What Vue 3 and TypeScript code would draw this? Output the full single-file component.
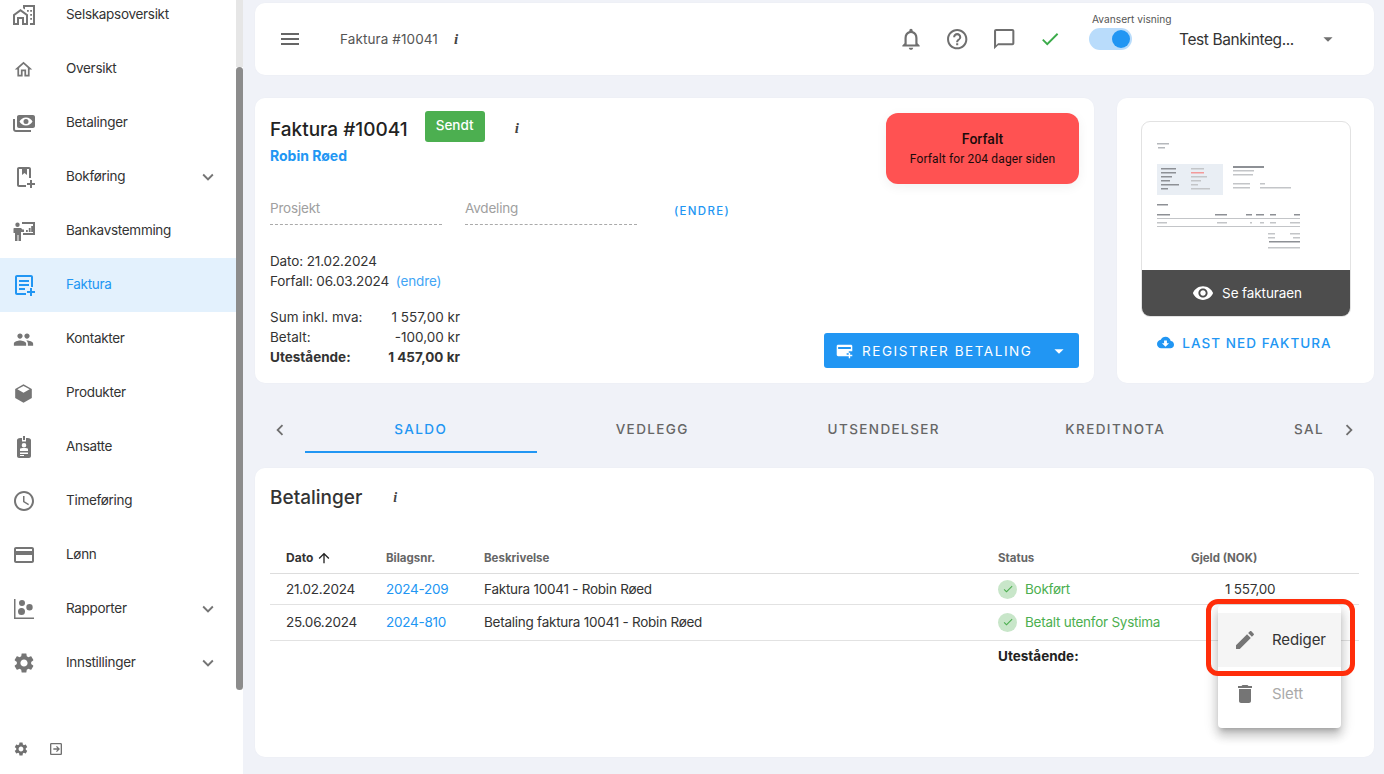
<script setup lang="ts">
interface NavItem { label: string; icon: string; caret?: boolean; active?: boolean; small?: boolean }

const ic: Record<string, string> = {
  company: 'M1 11.5V22h6v-6h3v6h6V11.5L8.5 6zM3 12.4l5.5-4 5.5 4V20h-2v-6H5v6H3zM11 2v3.2l2 1.4V4h8v16h-3v2h5V2zM15 7h1.8v1.8H15zM18.2 7H20v1.8h-1.800zM18.2 11H20v1.800h-1.800zM18.2 15H20v1.800h-1.800z',
  home: 'M12 5.690l5 4.500V18h-2v-6H9v6H7v-7.810l5-4.500M12 3L2 12h3v8h6v-6h2v6h6v-8h3L12 3z',
  pay: 'M7 4h14c1.100 0 2 .9 2 2v9c0 1.100-.9 2-2 2H7c-1.100 0-2-.9-2-2V6c0-1.100.9-2 2-2zm7 2.500c-3 0-5.500 2-6.500 4 1 2 3.500 4 6.500 4s5.500-2 6.500-4c-1-2-3.500-4-6.500-4zm0 1.500a2.500 2.500 0 1 1 0 5 2.500 2.500 0 0 1 0-5zM1 8h2v10c0 .6.4 1 1 1h15v2H4c-1.700 0-3-1.300-3-3z',
  book: 'M7 2h10c1.100 0 2 .9 2 2v9h-2V4h-2v6l-2.500-2L10 10V4H7v16h7v2H7c-1.100 0-2-.9-2-2V4c0-1.100.9-2 2-2zm13 13v3h3v2h-3v3h-2v-3h-3v-2h3v-3z',
  bank: 'M5.500 3.500a2.200 2.200 0 1 1 0 4.400 2.200 2.200 0 0 1 0-4.400zM2 9h7l1.500 1.500H12V13H9v9H6.500v-6h-1v6H3v-8H1.500v-3.500C1.500 9.700 1.700 9 2 9zM10 3h13v13H11v-2h10V5H10zM14 11h1.800v2H14zM16.800 9h1.800v4h-1.800zM19.200 7H21v6h-1.800z',
  invoice: 'M5 2h14c1.100 0 2 .9 2 2v10h-2V4H5v16h9v2H5c-1.100 0-2-.9-2-2V4c0-1.100.9-2 2-2zm2 5h10v2H7zm0 4h10v2H7zm0 4h6v2H7zm13 0v3h3v2h-3v3h-2v-3h-3v-2h3v-3z',
  people: 'M16 11c1.660 0 2.990-1.340 2.990-3S17.660 5 16 5c-1.660 0-3 1.340-3 3s1.340 3 3 3zm-8 0c1.660 0 2.990-1.340 2.990-3S9.660 5 8 5C6.340 5 5 6.340 5 8s1.340 3 3 3zm0 2c-2.330 0-7 1.170-7 3.500V19h14v-2.500c0-2.330-4.670-3.500-7-3.500zm8 0c-.29 0-.62.02-.97.05 1.160.84 1.970 1.970 1.970 3.450V19h6v-2.500c0-2.330-4.670-3.500-7-3.500z',
  box: 'M12 1.500l9.500 5.300v10.400L12 22.500l-9.500-5.300V6.800zM5 7.200l7 3.900 7-3.900-7-3.700z',
  badge: 'M11 1h2v4h-2zM8 3h2v3.500h4V3h2c1.100 0 3 .9 3 2v16c0 1.100-.9 2-2 2H7c-1.100 0-2-.9-2-2V5c0-1.100 1.900-2 3-2zm4 5a2.300 2.300 0 1 0 0 4.600A2.300 2.300 0 0 0 12 8zm-4 6v2h8v-2c0-.8-1.800-1-4-1s-4 .2-4 1zm0 3.500V19h8v-1.500zm0 2.500v1h4v-1z',
  clock: 'M11.990 2C6.470 2 2 6.480 2 12s4.470 10 9.990 10C17.520 22 22 17.520 22 12S17.520 2 11.990 2zM12 20c-4.420 0-8-3.580-8-8s3.580-8 8-8 8 3.580 8 8-3.580 8-8 8zm.5-13H11v6l5.250 3.150.75-1.230-4.500-2.670z',
  card: 'M20 4H4c-1.110 0-1.990.89-1.990 2L2 18c0 1.110.89 2 2 2h16c1.110 0 2-.89 2-2V6c0-1.110-.89-2-2-2zm0 14H4v-6h16v6zm0-10H4V6h16v2z',
  chart: 'M2 2h1.500v18.500H22V22H2zM10 3a3 3 0 1 1 0 6 3 3 0 0 1 0-6zm7.500 4a3.200 3.200 0 1 1 0 6.400 3.200 3.200 0 0 1 0-6.400zM9.500 11a3.500 3.500 0 1 1 0 7 3.500 3.500 0 0 1 0-7z',
  gear: 'M19.140 12.940c.04-.3.06-.61.06-.94 0-.32-.02-.64-.07-.94l2.030-1.580c.18-.14.23-.41.12-.61l-1.920-3.320c-.12-.22-.37-.29-.59-.22l-2.390.96c-.5-.38-1.030-.7-1.620-.94l-.36-2.540c-.04-.24-.24-.41-.48-.41h-3.840c-.24 0-.43.17-.47.41l-.36 2.540c-.59.24-1.130.57-1.620.94l-2.390-.96c-.22-.08-.47 0-.59.22L2.740 8.870c-.12.21-.08.47.12.61l2.030 1.580c-.05.3-.09.63-.09.94s.02.64.07.94l-2.030 1.580c-.18.14-.23.41-.12.61l1.920 3.320c.12.22.37.29.59.22l2.390-.96c.5.38 1.030.7 1.620.94l.36 2.540c.05.24.24.41.48.41h3.840c.24 0 .44-.17.47-.41l.36-2.540c.59-.24 1.130-.56 1.620-.94l2.390.96c.22.08.47 0 .59-.22l1.920-3.320c.12-.22.07-.47-.12-.61l-2.010-1.580zM12 15.600c-1.980 0-3.600-1.620-3.600-3.600s1.620-3.600 3.600-3.600 3.600 1.620 3.600 3.600-1.620 3.600-3.600 3.600z',
  logout: 'M5 3h14c1.100 0 2 .9 2 2v14c0 1.100-.9 2-2 2H5c-1.100 0-2-.9-2-2V5c0-1.100.9-2 2-2zm0 2v14h14V5zm3 6h6.200l-2.200-2.200L13.400 7.400 18 12l-4.600 4.600-1.400-1.400 2.200-2.200H8z',
  expand: 'M16.590 8.590L12 13.170 7.410 8.590 6 10l6 6 6-6z',
  drop: 'M7 10l5 5 5-5z',
  left: 'M15.410 7.410L14 6l-6 6 6 6 1.410-1.410L10.830 12z',
  right: 'M10 6L8.590 7.410 13.170 12l-4.580 4.590L10 18l6-6z',
  menu: 'M3 18h18v-2H3v2zm0-5h18v-2H3v2zm0-7v2h18V6H3z',
  bell: 'M12 22c1.100 0 2-.9 2-2h-4c0 1.100.9 2 2 2zm6-6v-5c0-3.070-1.630-5.640-4.500-6.320V4c0-.83-.67-1.500-1.500-1.500s-1.500.67-1.500 1.500v.68C7.640 5.360 6 7.920 6 11v5l-2 2v1h16v-1l-2-2zm-2 1H8v-6c0-2.480 1.510-4.500 4-4.500s4 2.020 4 4.500v6z',
  help: 'M11 18h2v-2h-2v2zm1-16C6.480 2 2 6.480 2 12s4.480 10 10 10 10-4.480 10-10S17.520 2 12 2zm0 18c-4.410 0-8-3.590-8-8s3.590-8 8-8 8 3.590 8 8-3.590 8-8 8zm0-14c-2.210 0-4 1.790-4 4h2c0-1.100.9-2 2-2s2 .9 2 2c0 2-3 1.750-3 5h2c0-2.250 3-2.500 3-5 0-2.210-1.790-4-4-4z',
  chat: 'M20 2H4c-1.100 0-2 .9-2 2v18l4-4h14c1.100 0 2-.9 2-2V4c0-1.100-.9-2-2-2zm0 14H6l-2 2V4h16v12z',
  check: 'M9 16.170L4.830 12l-1.420 1.410L9 19 21 7l-1.410-1.410z',
  eye: 'M12 4.500C7 4.500 2.730 7.610 1 12c1.730 4.390 6 7.500 11 7.500s9.270-3.110 11-7.500c-1.730-4.390-6-7.500-11-7.500zM12 17c-2.760 0-5-2.240-5-5s2.240-5 5-5 5 2.240 5 5-2.240 5-5 5zm0-8c-1.660 0-3 1.340-3 3s1.340 3 3 3 3-1.340 3-3-1.340-3-3-3z',
  cloud: 'M19.350 10.040C18.670 6.590 15.640 4 12 4 9.110 4 6.600 5.640 5.350 8.040 2.340 8.360 0 10.910 0 14c0 3.310 2.690 6 6 6h13c2.760 0 5-2.240 5-5 0-2.640-2.050-4.780-4.650-4.960zM17 13l-5 5-5-5h3V9h4v4h3z',
  addcard: 'M3 4h18c1.100 0 2 .9 2 2v7h-5v3h-3v4H3c-1.100 0-2-.9-2-2V6c0-1.100.9-2 2-2zm0 6h18V7H3zm17 5v3h3v2h-3v3h-2v-3h-3v-2h3v-3z',
  up: 'M4 12l1.410 1.410L11 7.830V20h2V7.830l5.580 5.590L20 12l-8-8-8 8z',
  edit: 'M3 17.250V21h3.750L17.810 9.940l-3.750-3.750L3 17.250zM20.710 7.040c.39-.39.39-1.020 0-1.410l-2.340-2.340c-.39-.39-1.020-.39-1.410 0l-1.830 1.830 3.750 3.750 1.830-1.830z',
  trash: 'M6 19c0 1.100.9 2 2 2h8c1.100 0 2-.9 2-2V7H6v12zM19 4h-3.500l-1-1h-5l-1 1H5v2h14V4z',
}

const nav: NavItem[] = [
  { label: 'Selskapsoversikt', icon: 'company' },
  { label: 'Oversikt', icon: 'home', small: true },
  { label: 'Betalinger', icon: 'pay' },
  { label: 'Bokføring', icon: 'book', caret: true },
  { label: 'Bankavstemming', icon: 'bank' },
  { label: 'Faktura', icon: 'invoice', active: true },
  { label: 'Kontakter', icon: 'people', small: true },
  { label: 'Produkter', icon: 'box', small: true },
  { label: 'Ansatte', icon: 'badge' },
  { label: 'Timeføring', icon: 'clock' },
  { label: 'Lønn', icon: 'card' },
  { label: 'Rapporter', icon: 'chart', caret: true },
  { label: 'Innstillinger', icon: 'gear', caret: true },
]

const tabs = ['SALDO', 'VEDLEGG', 'UTSENDELSER', 'KREDITNOTA', 'SAL']

const rows = [
  { date: '21.02.2024', nr: '2024-209', text: 'Faktura 10041 - Robin Røed', status: 'Bokført', debt: '1 557,00' },
  { date: '25.06.2024', nr: '2024-810', text: 'Betaling faktura 10041 - Robin Røed', status: 'Betalt utenfor Systima', debt: '' },
]
</script>

<template>
  <div class="app">
    <aside class="side">
      <div class="side-main">
        <ul class="nav">
          <li v-for="n in nav" :key="n.label" class="nav-item" :class="{ active: n.active }">
            <span class="nav-box"><svg class="nav-ic" :class="{ small: n.small }" viewBox="0 0 24 24"><path :d="ic[n.icon]" /></svg></span>
            <span class="nav-label">{{ n.label }}</span>
            <svg v-if="n.caret" class="nav-caret" viewBox="0 0 24 24"><path :d="ic.expand" /></svg>
          </li>
        </ul>
        <div class="side-foot">
          <svg viewBox="0 0 24 24"><path :d="ic.gear" /></svg>
          <svg viewBox="0 0 24 24"><path :d="ic.logout" /></svg>
        </div>
      </div>
      <div class="track"><div class="thumb"></div></div>
    </aside>

    <main class="main">
      <header class="card top">
        <svg class="top-menu" viewBox="0 0 24 24"><path :d="ic.menu" /></svg>
        <span class="top-title">Faktura #10041</span>
        <i class="info top-info">i</i>
        <div class="top-icons">
          <svg class="bell" viewBox="0 0 24 24"><path :d="ic.bell" /></svg>
          <svg viewBox="0 0 24 24"><path :d="ic.help" /></svg>
          <svg viewBox="0 0 24 24"><path :d="ic.chat" /></svg>
          <svg class="ok" viewBox="0 0 24 24"><path :d="ic.check" /></svg>
        </div>
        <div class="toggle-wrap">
          <span class="toggle-label">Avansert visning</span>
          <div class="toggle"><span class="knob"></span></div>
        </div>
        <span class="company">Test Bankinteg...</span>
        <svg class="company-drop" viewBox="0 0 24 24"><path :d="ic.drop" /></svg>
      </header>

      <section class="row-cards">
        <div class="card invoice">
          <div class="inv-left">
            <div class="inv-head">
              <h1>Faktura #10041</h1>
              <span class="sent">Sendt</span>
              <i class="info inv-info">i</i>
            </div>
            <a class="customer">Robin Røed</a>
            <div class="fields">
              <div class="field">Prosjekt</div>
              <div class="field">Avdeling</div>
              <a class="change-caps">(ENDRE)</a>
            </div>
            <div class="dates">
              <div>Dato: 21.02.2024</div>
              <div>Forfall: 06.03.2024 <a class="link-soft">(endre)</a></div>
            </div>
            <div class="sums">
              <span>Sum inkl. mva:</span><span class="num">1 557,00 kr</span>
              <span>Betalt:</span><span class="num">-100,00 kr</span>
              <b>Utestående:</b><b class="num">1 457,00 kr</b>
            </div>
          </div>
          <div class="inv-right">
            <div class="due">
              <strong>Forfalt</strong>
              <span>Forfalt for 204 dager siden</span>
            </div>
            <button class="register">
              <svg class="reg-ic" viewBox="0 0 24 24"><path :d="ic.addcard" /></svg>
              <span>REGISTRER BETALING</span>
              <svg class="reg-drop" viewBox="0 0 24 24"><path :d="ic.drop" /></svg>
            </button>
          </div>
        </div>

        <div class="card preview">
          <div class="doc">
            <svg class="doc-img" viewBox="0 0 208 148">
              <g fill="#b5b8bc">
                <rect x="15" y="21" width="12" height="1.500" /><rect x="16" y="25" width="7" height="1.500" />
              </g>
              <rect x="15" y="42" width="66" height="31" fill="#e9eef4" />
              <g fill="#8d9095">
                <rect x="19" y="46" width="15" height="1.500" /><rect x="19" y="50" width="15" height="1.500" /><rect x="19" y="54" width="11" height="1.500" /><rect x="19" y="58" width="9" height="1.500" /><rect x="19" y="62" width="18" height="1.500" /><rect x="19" y="66" width="7" height="1.500" />
                <rect x="91" y="44" width="31" height="2" /><rect x="15" y="82" width="11" height="1.500" />
                <rect x="15" y="92" width="13" height="1.500" /><rect x="73" y="92" width="12" height="1.500" /><rect x="104" y="92" width="6" height="1.500" /><rect x="114" y="92" width="8" height="1.500" /><rect x="128" y="92" width="6" height="1.500" /><rect x="152" y="92" width="6" height="1.500" />
                <rect x="127" y="119" width="31" height="1.500" />
              </g>
              <g fill="#f39a9a"><rect x="49" y="50" width="13" height="1.500" /></g>
              <g fill="#c3c5c8">
                <rect x="49" y="46" width="13" height="1.500" /><rect x="49" y="54" width="16" height="1.500" /><rect x="49" y="58" width="10" height="1.500" /><rect x="49" y="62" width="7" height="1.500" /><rect x="49" y="66" width="19" height="1.500" />
                <rect x="91" y="48" width="21" height="1.500" /><rect x="91" y="52" width="20" height="1.500" /><rect x="91" y="61" width="17" height="1.500" /><rect x="118" y="61" width="5" height="1.500" /><rect x="91" y="65" width="17" height="1.500" /><rect x="118" y="65" width="31" height="1.500" />
                <rect x="15" y="96" width="143" height="1" /><rect x="15" y="104" width="143" height="1" />
                <rect x="15" y="100" width="10" height="1.500" /><rect x="75" y="100" width="10" height="1.500" /><rect x="108" y="100" width="2" height="1.500" /><rect x="118" y="100" width="4" height="1.500" /><rect x="128" y="100" width="6" height="1.500" /><rect x="148" y="100" width="10" height="1.500" />
                <rect x="126" y="111" width="7" height="1.500" /><rect x="148" y="111" width="10" height="1.500" /><rect x="126" y="115" width="7" height="1.500" /><rect x="151" y="115" width="7" height="1.500" /><rect x="126" y="125" width="32" height="1.500" />
              </g>
            </svg>
            <div class="doc-bar">
              <svg viewBox="0 0 24 24"><path :d="ic.eye" /></svg>
              <span>Se fakturaen</span>
            </div>
          </div>
          <a class="download">
            <svg viewBox="0 0 24 24"><path :d="ic.cloud" /></svg>
            <span>LAST NED FAKTURA</span>
          </a>
        </div>
      </section>

      <nav class="tabs">
        <svg class="tab-arrow" viewBox="0 0 24 24"><path :d="ic.left" /></svg>
        <div class="tab-list">
          <div v-for="(t, i) in tabs" :key="t" class="tab" :class="{ 'tab-on': i === 0, 'tab-cut': i === 4 }">{{ t }}</div>
        </div>
        <svg class="tab-arrow" viewBox="0 0 24 24"><path :d="ic.right" /></svg>
      </nav>

      <section class="card pay">
        <div class="pay-head">
          <h2>Betalinger</h2>
          <i class="info pay-info">i</i>
        </div>
        <table class="tbl">
          <colgroup>
            <col class="c1" /><col class="c2" /><col class="c3" /><col class="c4" /><col />
          </colgroup>
          <thead>
            <tr>
              <th class="th-date">Dato <svg viewBox="0 0 24 24"><path :d="ic.up" /></svg></th>
              <th>Bilagsnr.</th><th>Beskrivelse</th><th>Status</th><th>Gjeld (NOK)</th>
            </tr>
          </thead>
          <tbody>
            <tr v-for="r in rows" :key="r.nr">
              <td>{{ r.date }}</td>
              <td><a class="blue">{{ r.nr }}</a></td>
              <td>{{ r.text }}</td>
              <td>
                <span class="status">
                  <span class="dot"><svg viewBox="0 0 24 24"><path :d="ic.check" /></svg></span>
                  {{ r.status }}
                </span>
              </td>
              <td class="debt">{{ r.debt }}</td>
            </tr>
            <tr class="foot">
              <td colspan="3"></td>
              <td colspan="2"><b>Utestående:</b></td>
            </tr>
          </tbody>
        </table>

        <div class="menu">
          <div class="menu-item hover">
            <svg viewBox="0 0 24 24"><path :d="ic.edit" /></svg>
            <span>Rediger</span>
          </div>
          <div class="menu-item muted">
            <svg viewBox="0 0 24 24"><path :d="ic.trash" /></svg>
            <span>Slett</span>
          </div>
        </div>
        <div class="highlight"></div>
      </section>
    </main>
  </div>
</template>

<style>
html, body { margin: 0; overflow: hidden; }
</style>

<style scoped>
.app {
  display: flex;
  width: 1384px;
  height: 774px;
  overflow: hidden;
  background: #f0f2f8;
  font-family: Inter, "Liberation Sans", sans-serif;
  font-size: 14px;
  color: #333;
}
a { color: #2196f3; }
svg { display: block; fill: currentColor; flex: none; }

.side { width: 243px; display: flex; background: #fff; flex: none; height: 774px; }
.side-main { width: 236px; display: flex; flex-direction: column; overflow: hidden; }
.nav { list-style: none; margin: -12px 0 0; padding: 0; }
.nav-item { height: 54px; display: flex; align-items: center; padding-left: 11px; position: relative; color: #333; }
.nav-item.active { background: #e3f1fd; color: #2196f3; }
.nav-box { width: 25px; height: 24px; display: flex; align-items: center; justify-content: center; color: #757575; }
.nav-ic { width: 24px; height: 24px; }
.nav-ic.small { width: 21px; height: 21px; }
.active .nav-box { color: #2196f3; }
.nav-label { margin-left: 30px; margin-bottom: 2px; font-size: 13.500px; letter-spacing: -.3px; }
.nav-caret { width: 22px; height: 22px; margin-left: auto; margin-right: 17px; color: #757575; }
.side-foot { margin-top: auto; padding: 0 0 17px 13px; display: flex; gap: 19px; color: #707070; }
.side-foot svg { width: 16px; height: 16px; }
.track { width: 7px; background: linear-gradient(#e6e6e6 0 67px, #fff 67px); height: 774px; }
.thumb { margin-top: 67px; height: 623px; background: #8c8c8c; border-radius: 4px; }

.main { flex: 1; min-width: 0; padding: 3px 10px 17px 12px; display: flex; flex-direction: column; }
.card { background: #fff; border-radius: 10px; box-shadow: 0 0 2px rgba(60, 70, 100, .03); }

.top { height: 72px; display: flex; align-items: center; padding-left: 23px; flex: none; }
.top-menu { width: 24px; height: 24px; color: #666; }
.top-title { margin-left: 38px; font-size: 13.500px; letter-spacing: .1px; color: #555; }
.info { font-family: "Liberation Serif", serif; font-style: italic; font-weight: 700; color: #444; font-size: 15px; }
.top-info { margin-left: 16px; }
.top-icons { margin-left: auto; display: flex; align-items: center; gap: 22px; color: #6f6f6f; }
.top-icons svg { width: 24.400px; height: 24.400px; }
.top-icons .bell { width: 26px; height: 26px; margin: 0 -1px; }
.top-icons .ok { color: #3bab4a; width: 22px; height: 22px; margin: 0 1px; }
.toggle-wrap { margin-left: 27px; width: 78px; display: flex; flex-direction: column; align-items: flex-start; align-self: flex-start; padding-top: 10px; }
.toggle-label { font-size: 10.200px; color: #555; line-height: 12px; white-space: nowrap; margin-left: 3px; margin-bottom: 3px; }
.toggle { width: 43px; height: 22px; border-radius: 11px; background: #b9dcfb; position: relative; }
.knob { position: absolute; right: 2px; top: 2px; width: 18px; height: 18px; border-radius: 50%; background: #2196f3; }
.company { font-size: 15.500px; letter-spacing: -.4px; color: #333; margin-left: 12px; width: 136px; white-space: nowrap; }
.company-drop { width: 22px; height: 22px; color: #707070; margin-left: 2px; margin-right: 35px; }

.row-cards { display: flex; gap: 23px; margin-top: 23px; height: 285px; flex: none; }
.invoice { width: 839px; display: flex; padding: 15px; box-sizing: border-box; justify-content: space-between; }
.inv-left { width: 560px; }
.inv-head { display: flex; align-items: flex-start; }
.inv-head h1 { margin: 5px 0 0; font-size: 19px; line-height: 24px; font-weight: 500; color: #222; white-space: nowrap; }
.sent { margin-left: 17px; margin-top: -2px; width: 60px; height: 31px; line-height: 29px; background: #4caf50; color: #fff; border-radius: 3px; text-align: center; font-size: 13.500px; font-weight: 500; }
.inv-info { margin-left: 30px; margin-top: 7px; }
.customer { display: block; margin-top: 4px; font-weight: 700; font-size: 14px; line-height: 20px; }
.fields { display: flex; margin-top: 31px; align-items: flex-end; }
.field { width: 172px; height: 28px; border-bottom: 1px dashed #aaa; color: #a0a0a0; font-size: 13.500px; letter-spacing: -.2px; margin-right: 23px; line-height: 16px; padding-top: 3px; box-sizing: border-box; }
.change-caps { margin: 0 0 7px 14px; font-size: 11.500px; letter-spacing: 1.300px; font-weight: 500; }
.dates { margin-top: 26px; line-height: 20px; font-size: 13.500px; letter-spacing: -.12px; }
.link-soft { margin-left: 3px; color: #42a5f5; }
.sums { margin-top: 16px; display: grid; width: 190px; grid-template-columns: 100px 90px; line-height: 20px; font-size: 13.500px; }
.num { text-align: right; white-space: nowrap; }
.inv-right { display: flex; flex-direction: column; justify-content: space-between; align-items: flex-end; }
.due { width: 193px; height: 71px; background: #ff5252; border-radius: 12px; box-sizing: border-box; padding-top: 17px; display: flex; flex-direction: column; align-items: center; font-family: Roboto, sans-serif; color: #1b0b0b; box-shadow: 0 3px 12px rgba(0, 0, 0, .06); }
.due strong { font-size: 14px; font-weight: 500; line-height: 18px; }
.due span { font-size: 12px; line-height: 22px; letter-spacing: .14px; }
.register { width: 255px; height: 35px; border: 0; padding: 0 0 0 12px; background: #2196f3; border-radius: 3px; color: #fff; display: flex; align-items: center; font-family: inherit; font-size: 13.500px; letter-spacing: 1.550px; font-weight: 400; }
.reg-ic { width: 17px; height: 17px; margin-right: 9px; }
.reg-drop { width: 22px; height: 22px; margin-left: auto; margin-right: 9px; }

.preview { width: 257px; padding: 23px 24px 0; box-sizing: border-box; }
.doc { width: 210px; height: 196px; border: 1px solid #e2e2e2; border-radius: 9px; overflow: hidden; display: flex; flex-direction: column; box-sizing: border-box; }
.doc-img { width: 208px; height: 148px; filter: blur(.35px); }
.doc-bar { flex: 1; background: #4d4d4d; color: #fff; display: flex; align-items: center; justify-content: center; gap: 8px; font-size: 13.500px; padding-left: 2px; letter-spacing: -.1px; }
.doc-bar svg { width: 22px; height: 22px; }
.download { display: flex; align-items: center; justify-content: center; gap: 8px; margin-top: 17px; padding-right: 2px; font-size: 13.500px; letter-spacing: 1.050px; font-weight: 500; }
.download svg { width: 17px; height: 17px; }

.tabs { display: flex; align-items: center; height: 46px; margin-top: 24px; flex: none; }
.tab-arrow { width: 22px; height: 22px; color: #6f6f6f; margin: 0 14px; }
.tab-list { display: flex; flex: 1; overflow: hidden; }
.tab { width: 231.500px; flex: none; height: 46px; line-height: 44px; text-align: center; font-size: 13.500px; letter-spacing: 1.400px; color: #666; box-sizing: border-box; font-weight: 500; }
.tab-on { color: #2196f3; border-bottom: 2px solid #2196f3; }
.tab-cut { width: 93px; padding-left: 63px; text-align: left; white-space: nowrap; overflow: hidden; }

.pay { position: relative; margin-top: 15px; height: 289px; padding: 0 15px; flex: none; box-sizing: border-box; }
.pay-head { display: flex; align-items: center; padding-top: 18px; height: 24px; }
.pay-head h2 { margin: 0; font-size: 19px; font-weight: 500; color: #333; line-height: 24px; }
.pay-info { margin-left: 31px; font-size: 14px; }
.tbl { width: 1089px; margin-top: 33px; border-collapse: collapse; table-layout: fixed; font-size: 13.500px; letter-spacing: -.25px; }
.c1 { width: 100px; }
.c2 { width: 98px; }
.c3 { width: 514px; }
.c4 { width: 193px; }
.tbl th { text-align: left; font-size: 11.500px; font-weight: 700; color: #666; height: 30px; padding: 0 0 0 16px; border-bottom: 1px solid #ddd; letter-spacing: 0; }
.tbl .th-date { color: #333; font-size: 12px; }
.th-date svg { display: inline-block; width: 16px; height: 16px; vertical-align: -4px; color: #222; }
.tbl td { padding: 0 0 0 16px; height: 30px; border-bottom: 1px solid #e2e2e2; color: #333; white-space: nowrap; }
.tbl tbody tr:nth-child(2) td { height: 36px; padding-bottom: 1px; box-sizing: border-box; }
.tbl .foot td { border: 0; height: 30px; color: #222; letter-spacing: 0; }
.blue { color: #2196f3; }
.status { display: flex; align-items: center; gap: 8px; color: #4caf50; }
.dot { width: 19px; height: 19px; border-radius: 50%; background: #c8e6c9; display: flex; align-items: center; justify-content: center; color: #4caf50; }
.dot svg { width: 12px; height: 12px; }
.tbl .debt { padding-left: 50px; }

.menu { position: absolute; left: 963px; top: 137px; width: 123px; height: 123px; padding: 8px 0; box-sizing: border-box; background: #fff; border-radius: 4px; box-shadow: 0 5px 5px -3px rgba(0,0,0,.2), 0 8px 10px 1px rgba(0,0,0,.14), 0 3px 14px 2px rgba(0,0,0,.12); }
.menu-item { height: 54px; display: flex; align-items: center; padding-left: 15px; font-size: 15px; letter-spacing: -.1px; color: #333; }
.menu-item svg { width: 24px; height: 24px; color: #757575; margin-right: 15px; }
.menu-item span { margin-bottom: 2px; }
.hover { background: #f5f5f5; }
.muted span { color: #aaa; }
.highlight { position: absolute; left: 951px; top: 131px; width: 149px; height: 77px; box-sizing: border-box; border: 5px solid #ff2d0a; border-radius: 12px; pointer-events: none; }
</style>
